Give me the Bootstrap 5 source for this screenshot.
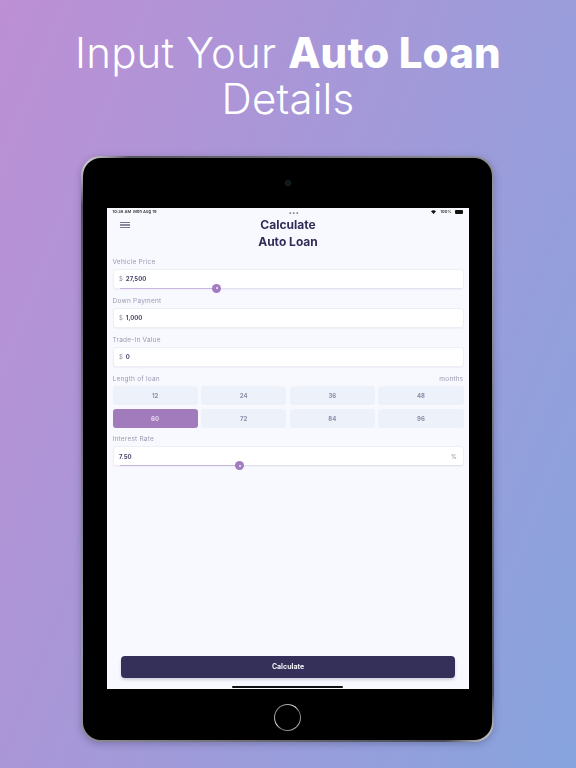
<!DOCTYPE html>
<html lang="en"><head><meta charset="utf-8"><title>Auto Loan</title>
<link href="https://cdn.jsdelivr.net/npm/bootstrap@5.3.0/dist/css/bootstrap.min.css" rel="stylesheet">
<style>
html,body{height:768px;overflow:hidden}
body{background:linear-gradient(112deg,#bd8fd4 0%,#87a4de 100%);font-family:Inter,"Open Sans",sans-serif;color:#35305a}
.headline{padding-top:29.5px;height:156px;font-size:42px;line-height:46px;font-weight:300;color:#fff;text-align:center;letter-spacing:.15px}
.headline b{font-weight:800}
.tablet{width:413px;height:586px;margin-left:81px;padding:50px 23px 0 24px;border:2px solid transparent;border-radius:20px;background:linear-gradient(#000,#000) padding-box,linear-gradient(135deg,#eee 0%,#55555c 5%,#9a9aa2 50%,#4c4c54 95%,#ddd 100%) border-box;box-shadow:0 2px 7px rgba(40,40,80,.3);position:relative}
.lens{position:absolute;left:202px;top:22px;width:6px;height:6px;border-radius:50%;background:#0c1418;border:1px solid #1b2a30}
.homekey{position:absolute;left:191px;top:545.5px;width:27px;height:27px;border-radius:50%;border:1px solid transparent;background:linear-gradient(#000,#000) padding-box,linear-gradient(135deg,#555,#eee 45%,#666 60%,#ddd) border-box}
.screen{width:362px;height:481px;background:#f8f9ff;padding:0 5.5px;position:relative;will-change:transform}
.statusline{height:8px;font-size:4px;line-height:6px;font-weight:600;color:#333;letter-spacing:.05px}
.statusline .dots{letter-spacing:.5px;font-size:6px;line-height:5px;color:#777}
.wifi{width:5px;height:4px}
.batt{display:inline-block;width:8px;height:3.5px;background:#111;border-radius:1px}
.burger{position:absolute;left:12.5px;top:14px;width:10px;height:6px;border-top:1px solid #77758f;border-bottom:1px solid #77758f}
.burger::after{content:"";display:block;height:1.5px;margin-top:1.2px;background:#8b8aa2}
.heading{font-size:12px;line-height:17px;font-weight:700;color:#322d58;text-align:center;margin-top:-.5px}
.fieldname{font-size:6.5px;line-height:8px;color:#9a9ab0;letter-spacing:.22px;font-weight:400}
.entry{height:20px;background:#fff;border:1px solid #eeeff5;border-radius:3px;padding:0 5.5px;font-size:6px;color:#4a4768;font-weight:700;box-shadow:0 1px 1px rgba(60,60,110,.05);margin-top:3px;position:relative}
.entry i{font-style:normal;font-weight:400;color:#8e8ea4;margin-right:3px}
.sliderbar{position:absolute;left:6px;right:2px;bottom:-1px;height:1px;background:#e2e1ec}
.sliderfill{height:1px;background:#c9b5de}
.knob{position:absolute;top:-4px;width:9px;height:9px;margin-left:-4.5px;border-radius:50%;background:#a27bc1;display:flex;align-items:center;justify-content:center}
.knob::after{content:"";width:2px;height:2px;border-radius:50%;background:#f2ecf7}
.termgrid{display:grid;grid-template-columns:repeat(4,1fr);gap:3.5px;margin-top:3px}
.term{height:19.5px;background:#edf1fa;border:0;border-radius:3px;padding:0;font-size:6px;font-weight:700;color:#8d8ea6;display:flex;align-items:center;justify-content:center}
.term.chosen{background:#a27bbd;color:#e8ddf0}
.gobtn{position:absolute;left:14px;top:448px;width:334px;height:21.5px;background:#35305a;border:0;border-radius:4px;padding:0;color:#f2f2f7;font-size:7px;font-weight:700;box-shadow:0 2px 3px rgba(50,50,90,.2)}
.homebar{position:absolute;left:125px;top:478px;width:111px;height:2px;background:#111;border-radius:1px}
.sp-head{height:8px}.sp-row{height:8px}.sp-rate{height:7px}
</style></head>
<body>
<div class="headline">Input Your <b>Auto Loan</b><br>Details</div>
<div class="tablet">
  <span class="lens"></span>
  <div class="screen">
    <div class="statusline d-flex justify-content-between align-items-center">
      <span>10:38 AM &nbsp;Mon Aug 19</span>
      <span class="dots">•••</span>
      <span class="d-flex align-items-center gap-1">
        <svg class="wifi" viewBox="0 0 10 8"><path d="M0 2.4C3 -.4 7 -.4 10 2.4L5 8Z" fill="#111"/></svg>100% <span class="batt"></span>
      </span>
    </div>
    <span class="burger"></span>
    <div class="heading">Calculate<br>Auto Loan</div>
    <div class="sp-head"></div>
    <div class="fieldname">Vehicle Price</div>
    <div class="entry d-flex align-items-center"><i>$</i>27,500
      <div class="sliderbar"><div class="sliderfill" style="width:97px"></div><span class="knob" style="left:97px"></span></div>
    </div>
    <div class="sp-row"></div>
    <div class="fieldname">Down Payment</div>
    <div class="entry d-flex align-items-center"><i>$</i>1,000</div>
    <div class="sp-row"></div>
    <div class="fieldname">Trade-In Value</div>
    <div class="entry d-flex align-items-center"><i>$</i>0</div>
    <div class="sp-row"></div>
    <div class="fieldname d-flex justify-content-between"><span>Length of loan</span><span>months</span></div>
    <div class="termgrid">
      <button class="term">12</button><button class="term">24</button><button class="term">36</button><button class="term">48</button>
      <button class="term chosen">60</button><button class="term">72</button><button class="term">84</button><button class="term">96</button>
    </div>
    <div class="sp-rate"></div>
    <div class="fieldname">Interest Rate</div>
    <div class="entry d-flex align-items-center justify-content-between"><span>7.50</span><i class="m-0">%</i>
      <div class="sliderbar"><div class="sliderfill" style="width:120px"></div><span class="knob" style="left:120px"></span></div>
    </div>
    <button class="gobtn">Calculate</button>
    <span class="homebar"></span>
  </div>
  <span class="homekey"></span>
</div>
<script src="https://cdn.jsdelivr.net/npm/bootstrap@5.3.0/dist/js/bootstrap.bundle.min.js"></script>
</body></html>
